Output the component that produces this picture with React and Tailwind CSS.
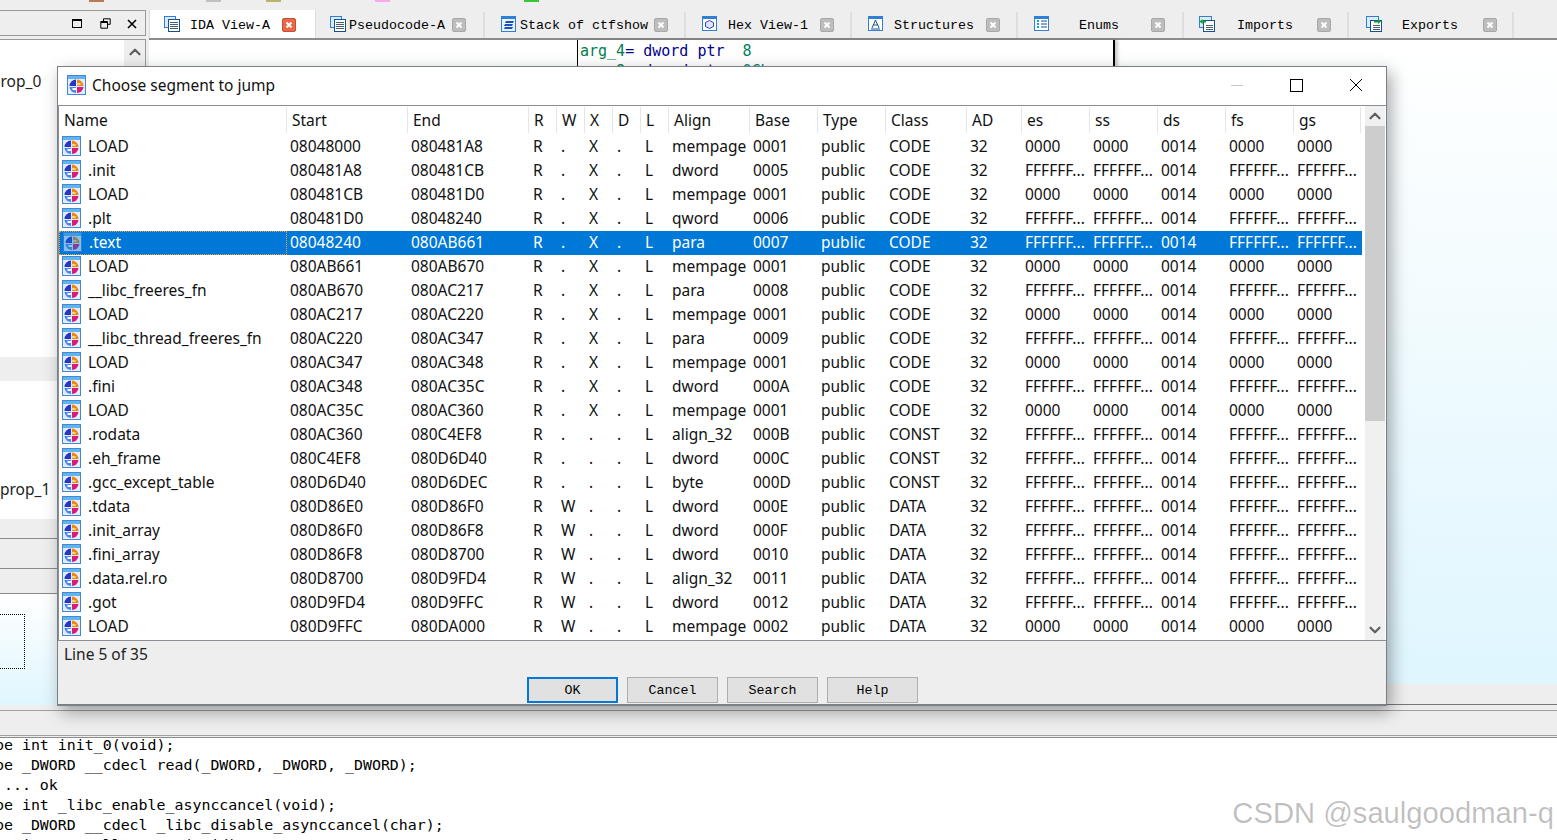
import { ChevronUp, ChevronDown } from 'lucide-react';

const UI = "font-['Noto_Sans',sans-serif]";
const TABS_FONT = "font-['Liberation_Mono',monospace]";
const CODE_FONT = "font-['DejaVu_Sans_Mono',monospace]";
const COLS = 'grid grid-cols-[228px_121px_120px_28px_28px_28px_28px_28px_81px_68px_68px_81px_55px_68px_68px_68px_68px_68px]';
const HEAD_COLS = 'grid grid-cols-[228px_121px_121px_28px_28px_28px_28px_28px_81px_68px_68px_81px_55px_68px_68px_68px_68px_67px]';

const HEADERS = ['Name', 'Start', 'End', 'R', 'W', 'X', 'D', 'L', 'Align', 'Base', 'Type', 'Class', 'AD', 'es', 'ss', 'ds', 'fs', 'gs'];

// name, start, end, write, exec, align, base, class
const SEGMENTS = [
  ['LOAD', '08048000', '080481A8', '.', 'X', 'mempage', '0001', 'CODE'],
  ['.init', '080481A8', '080481CB', '.', 'X', 'dword', '0005', 'CODE'],
  ['LOAD', '080481CB', '080481D0', '.', 'X', 'mempage', '0001', 'CODE'],
  ['.plt', '080481D0', '08048240', '.', 'X', 'qword', '0006', 'CODE'],
  ['.text', '08048240', '080AB661', '.', 'X', 'para', '0007', 'CODE'],
  ['LOAD', '080AB661', '080AB670', '.', 'X', 'mempage', '0001', 'CODE'],
  ['__libc_freeres_fn', '080AB670', '080AC217', '.', 'X', 'para', '0008', 'CODE'],
  ['LOAD', '080AC217', '080AC220', '.', 'X', 'mempage', '0001', 'CODE'],
  ['__libc_thread_freeres_fn', '080AC220', '080AC347', '.', 'X', 'para', '0009', 'CODE'],
  ['LOAD', '080AC347', '080AC348', '.', 'X', 'mempage', '0001', 'CODE'],
  ['.fini', '080AC348', '080AC35C', '.', 'X', 'dword', '000A', 'CODE'],
  ['LOAD', '080AC35C', '080AC360', '.', 'X', 'mempage', '0001', 'CODE'],
  ['.rodata', '080AC360', '080C4EF8', '.', '.', 'align_32', '000B', 'CONST'],
  ['.eh_frame', '080C4EF8', '080D6D40', '.', '.', 'dword', '000C', 'CONST'],
  ['.gcc_except_table', '080D6D40', '080D6DEC', '.', '.', 'byte', '000D', 'CONST'],
  ['.tdata', '080D86E0', '080D86F0', 'W', '.', 'dword', '000E', 'DATA'],
  ['.init_array', '080D86F0', '080D86F8', 'W', '.', 'dword', '000F', 'DATA'],
  ['.fini_array', '080D86F8', '080D8700', 'W', '.', 'dword', '0010', 'DATA'],
  ['.data.rel.ro', '080D8700', '080D9FD4', 'W', '.', 'align_32', '0011', 'DATA'],
  ['.got', '080D9FD4', '080D9FFC', 'W', '.', 'dword', '0012', 'DATA'],
  ['LOAD', '080D9FFC', '080DA000', 'W', '.', 'mempage', '0002', 'DATA'],
];

const TAB_LIST = [
  { label: 'IDA View-A', w: 'w-[167px]', pad: 'pl-[14px]', kind: 'view', active: true, gap: 'ml-[10px]', mr: 'mr-[19px]' },
  { label: 'Pseudocode-A', w: 'w-[169px]', pad: 'pl-[14px]', kind: 'view', gap: 'ml-[3px]', mr: 'mr-[17px]' },
  { label: 'Stack of ctfshow', w: 'w-[201px]', pad: 'pl-[16px]', kind: 'stack', gap: 'ml-[3px]', mr: 'mr-[16px]' },
  { label: 'Hex View-1', w: 'w-[166px]', pad: 'pl-[16px]', kind: 'hex', gap: 'ml-[10px]', mr: 'mr-[16px]' },
  { label: 'Structures', w: 'w-[166px]', pad: 'pl-[16px]', kind: 'struct', gap: 'ml-[10px]', mr: 'mr-[16px]' },
  { label: 'Enums', w: 'w-[166px]', pad: 'pl-[16px]', kind: 'enum', gap: 'ml-[29px]', mr: 'mr-[17px]' },
  { label: 'Imports', w: 'w-[165px]', pad: 'pl-[15px]', kind: 'imports', gap: 'ml-[22px]', mr: 'mr-[16px]' },
  { label: 'Exports', w: 'w-[165px]', pad: 'pl-[17px]', kind: 'exports', gap: 'ml-[20px]', mr: 'mr-[15px]' },
];

function SegIcon({ dim }) {
  return (
    <svg width="19" height="20" viewBox="0 0 19 20" className={dim ? 'mb-[2px] shrink-0 opacity-60' : 'mb-[2px] shrink-0'}>
      <rect x="0.5" y="0.5" width="18" height="19" fill="#e4eefa" stroke="#3f86dc" />
      <rect x="1" y="1" width="17" height="3" fill="#63b4ec" />
      <path d="M9 4.5 A6.5 6.5 0 0 0 2.5 11 H9 Z" fill="#2536cc" />
      <path d="M10 4.5 A6.5 6.5 0 0 1 16.5 11 H10 Z" fill="#ee8a12" />
      <path d="M9 12 H2.5 A6.5 6.5 0 0 0 9 18 Z" fill="#4f84f0" />
      <path d="M10 12 H16.5 A6.5 6.5 0 0 1 10 18 Z" fill="#d81c7c" />
      <rect x="5.5" y="13" width="3.5" height="2" fill="#fff" />
      <rect x="10" y="8" width="3.5" height="2" fill="#f8d28a" />
    </svg>
  );
}

function TabIcon({ kind }) {
  return (
    <svg width="16" height="16" viewBox="0 0 16 16" className="mb-[2px] shrink-0">
      {kind === 'view' && (
        <>
          <rect x="0.5" y="0.5" width="11" height="11" fill="#dcebfa" stroke="#2f7fd6" />
          <rect x="4.5" y="3.5" width="11" height="12" fill="#fff" stroke="#16508f" />
          <path d="M6 6.5h8M6 8.5h8M6 10.5h8M6 12.5h8" stroke="#4d5d70" />
        </>
      )}
      {kind === 'stack' && (
        <>
          <rect x="0.5" y="0.5" width="14" height="15" fill="#eaf3fc" stroke="#2f7fd6" />
          <rect x="1" y="1" width="13" height="2" fill="#2f7fd6" />
          <path d="M5 5h8l-1 2H4zM4 8h8l-1 2H3zM4 11h8l-1 2H3z" fill="#1b4fc0" />
        </>
      )}
      {kind === 'hex' && (
        <>
          <rect x="0.5" y="0.5" width="14" height="14" fill="#fff" stroke="#2f7fd6" />
          <rect x="1" y="1" width="13" height="2" fill="#2f7fd6" />
          <path d="M7.5 4.5 11.5 6.5V10.5L7.5 12.5 3.5 10.5V6.5Z" fill="#dfe4ff" stroke="#2d3fd0" />
        </>
      )}
      {kind === 'struct' && (
        <>
          <rect x="0.5" y="0.5" width="14" height="14" fill="#fff" stroke="#2f7fd6" />
          <rect x="1" y="1" width="13" height="2" fill="#2f7fd6" />
          <path d="M4 12 7.5 4 11 12M5.5 9h4" fill="none" stroke="#16508f" />
          <path d="M3 13h9" stroke="#16508f" />
        </>
      )}
      {kind === 'enum' && (
        <>
          <rect x="0.5" y="0.5" width="14" height="14" fill="#fff" stroke="#2f7fd6" />
          <rect x="1" y="1" width="13" height="2" fill="#2f7fd6" />
          <path d="M3 5h2M3 8h2M3 11h2" stroke="#18a0e0" strokeWidth="2" />
          <path d="M7 5h6M7 8h6M7 11h6" stroke="#16508f" />
        </>
      )}
      {(kind === 'imports' || kind === 'exports') && (
        <>
          <rect x="0.5" y="0.5" width="12" height="11" fill="#dcebfa" stroke="#2f7fd6" />
          <rect x="4.5" y="4.5" width="11" height="11" fill="#fff" stroke="#16508f" />
          <path d="M7 9.5h7M7 11.5h7M7 13.5h7" stroke="#4d5d70" />
          {kind === 'imports' ? (
            <path d="M7 4.5H3.5V3L0.5 5.5 3.5 8V6.5H7Z" fill="#12a02c" />
          ) : (
            <path d="M8 4.5h4V3l3 2.5L12 8V6.5H8Z" fill="#12a02c" />
          )}
        </>
      )}
    </svg>
  );
}

function CloseBox({ active }) {
  return (
    <span className={`flex h-[14px] w-[14px] shrink-0 items-center justify-center rounded-[2px] border ${active ? 'border-[#c9502f] bg-[#e8684a]' : 'border-[#a8a8a8] bg-[#bdbdbd]'}`}>
      <svg width="8" height="8" viewBox="0 0 8 8">
        <path d="M1.5 1.5 6.5 6.5M6.5 1.5 1.5 6.5" stroke="#fff" strokeWidth="2" />
      </svg>
    </span>
  );
}

function TabBar() {
  return (
    <div className={`flex h-[28px] items-stretch text-[13.33px] text-black ${TABS_FONT}`}>
      {TAB_LIST.map((t) => (
        <div
          key={t.label}
          className={`flex items-center ${t.pad} ${t.w} ${t.active ? 'mb-[-1px] border-x border-[#dcdcdc] bg-white' : 'mt-[2px] border-r-2 border-[#dedede] bg-[#eeeeee]'}`}
        >
          <TabIcon kind={t.kind} />
          <span className={`mt-[2px] whitespace-pre ${t.gap}`}>{t.label}</span>
          <span className={`ml-auto ${t.mr}`}><CloseBox active={t.active} /></span>
        </div>
      ))}
    </div>
  );
}

function LeftPane() {
  return (
    <div className="flex w-[146px] shrink-0 flex-col">
      <div className="flex h-[26px] items-center justify-end border-y border-r border-[#9a9a9a] pr-[8px] pt-[1px]">
        <span className="h-[9px] w-[10px] border border-t-2 border-black" />
        <svg width="11" height="11" viewBox="0 0 11 11" className="ml-[18px]"><path d="M3.5 3V.8h6.7v5.5H8M.8 3.5h6.7v6.7H.8zM.8 4.5h6.7" fill="none" stroke="#000" /></svg>
        <svg width="10" height="10" viewBox="0 0 10 10" className="ml-[16px]"><path d="M1 1 9 9M9 1 1 9" stroke="#000" strokeWidth="1.6" /></svg>
      </div>
      <div className="h-[3px]" />
      <div className={`flex flex-1 flex-col border-r border-t border-[#9a9a9a] bg-white text-[15.5px] text-[#222] ${UI}`}>
        <div className="flex h-[317px]">
          <div className="flex-1 overflow-hidden pt-[30px]">
            <div className="ml-[-9px]">prop_0</div>
          </div>
          <div className="flex h-[27px] w-[21px] justify-center bg-[#eeeeee] pt-[3px]">
            <ChevronUp size={18} strokeWidth={3} className="text-[#606060]" />
          </div>
        </div>
        <div className="h-[24px] bg-[#eeeeee]" />
        <div className="flex h-[138px] items-end pb-[18px]">
          <span>prop_1</span>
        </div>
        <div className="h-[20px] border-b border-[#8a8a8a] bg-[#eeeeee]" />
        <div className="h-[30px] border-b border-[#8a8a8a] bg-[#eeeeee]" />
        <div className="h-[25px] border-b border-[#8a8a8a] bg-[#eeeeee]" />
        <div className="flex-1 bg-gradient-to-b from-white to-[#dff6fe] pt-[20px]">
          <div className="h-[55px] w-[25px] border-b border-r border-t border-dotted border-black" />
        </div>
      </div>
    </div>
  );
}

function GraphPane() {
  return (
    <div className="flex flex-1 flex-col">
      <div className="flex flex-1 border-t-2 border-[#8c8c8c] bg-gradient-to-b from-white to-[#dff6fe] pl-[428px]">
        <div className={`h-[120px] w-[538px] border-l border-r-2 border-black bg-white pl-[2px] pt-[1px] text-[15px] leading-[20px] shadow-[3px_0_3px_rgba(0,0,0,0.2)] ${CODE_FONT}`}>
          <div className="whitespace-pre"><span className="text-[#00804a]">arg_4</span><span className="text-[#000090]">= dword ptr</span>  <span className="text-[#007f5f]">8</span></div>
          <div className="whitespace-pre"><span className="text-[#00804a]">arg_8</span><span className="text-[#000090]">= dword ptr</span>  <span className="text-[#007f5f]">0Ch</span></div>
        </div>
      </div>
    </div>
  );
}

function Output() {
  return (
    <div className={`h-[103px] shrink-0 overflow-hidden border-t border-[#8c8c8c] bg-white text-[14.92px] leading-[20px] text-black ${CODE_FONT}`}>
      <div className="ml-[-5px] mt-[-3px] whitespace-pre">
        <div>pe int init_0(void);</div>
        <div>pe _DWORD __cdecl read(_DWORD, _DWORD, _DWORD);</div>
        <div> ... ok</div>
        <div>pe int _libc_enable_asynccancel(void);</div>
        <div>pe _DWORD __cdecl _libc_disable_asynccancel(char);</div>
        <div>pe int __mcall_wrapup(void);</div>
      </div>
    </div>
  );
}

function SegmentRow({ seg, selected }) {
  const [name, start, end, w, x, align, base, cls] = seg;
  const flat = name === 'LOAD' ? '0000' : 'FFFFFF...';
  const wide = [start, end];
  const flags = ['R', w, x, '.', 'L'];
  const rest = [align, base, 'public', cls, '32'];
  const regs = [flat, flat, '0014', flat, flat];
  return (
    <div className={`${COLS} h-[24px] items-center whitespace-nowrap ${selected ? 'bg-[#0078d7] text-white' : 'text-[#111]'}`}>
      <div className={`flex h-[24px] items-center gap-[7px] pl-[3px] ${selected ? 'border border-dotted border-[#e8a33d]' : ''}`}>
        <SegIcon dim={selected} />
        <span>{name}</span>
      </div>
      {wide.map((v, i) => <div key={i} className="pl-[3px]">{v}</div>)}
      {flags.map((v, i) => <div key={i} className="pl-[5px]">{v}</div>)}
      {rest.map((v, i) => <div key={i} className="pl-[4px]">{v}</div>)}
      {regs.map((v, i) => <div key={i} className="pl-[4px]">{v}</div>)}
    </div>
  );
}

function Dialog() {
  const buttons = ['OK', 'Cancel', 'Search', 'Help'];
  return (
    <div className={`absolute left-[57px] top-[66px] flex h-[640px] w-[1330px] flex-col border border-b-2 border-[#7b7f86] bg-[#eeeeee] shadow-[4px_6px_16px_rgba(0,0,0,0.35)] text-[15.5px] ${UI}`}>
      <div className="flex h-[38px] shrink-0 items-center bg-white pl-[9px] text-[#111]">
        <SegIcon />
        <span className="ml-[6px]">Choose segment to jump</span>
        <div className="ml-auto mb-[2px] mr-[23px] flex items-center">
          <span className="h-px w-[12px] bg-[#c8c8c8]" />
          <span className="ml-[47px] h-[13px] w-[13px] border border-black" />
          <svg width="14" height="14" viewBox="0 0 14 14" className="ml-[46px]"><path d="M1 1 13 13M13 1 1 13" stroke="#000" /></svg>
        </div>
      </div>
      <div className="flex h-[536px] shrink-0 border-b border-l border-t border-[#8a8e95] bg-white">
        <div className="w-[1303px] shrink-0">
          <div className={`${HEAD_COLS} h-[28px] items-center`}>
            {HEADERS.map((h) => (
              <div key={h} className="flex h-[26px] items-center border-r border-[#e5e5e5] pl-[5px] pt-[2px] text-[#111]">{h}</div>
            ))}
          </div>
          <div className="h-px" />
          {SEGMENTS.map((s, i) => <SegmentRow key={i} seg={s} selected={i === 4} />)}
        </div>
        <div className="ml-[3px] flex w-[20px] shrink-0 flex-col items-center bg-[#f0f0f0]">
          <div className="flex h-[20px] items-center"><ChevronUp size={18} strokeWidth={3} className="text-[#606060]" /></div>
          <div className="h-[295px] w-full bg-[#cdcdcd]" />
          <div className="mt-auto flex h-[21px] items-center"><ChevronDown size={18} strokeWidth={3} className="text-[#606060]" /></div>
        </div>
      </div>
      <div className="flex-1 px-[6px] pt-[2px] text-[#222]">Line 5 of 35</div>
      <div className={`mb-[1px] flex gap-[9px] pl-[469px] text-[13.33px] text-black ${TABS_FONT}`}>
        {buttons.map((b, i) => (
          <button key={b} className={`h-[26px] w-[91px] bg-[#e1e1e1] pt-[2px] ${i === 0 ? 'border-2 border-[#0078d7]' : 'border border-[#adadad]'}`}>{b}</button>
        ))}
      </div>
    </div>
  );
}

export default function App() {
  return (
    <div className="relative flex h-[840px] w-[1557px] flex-col overflow-hidden bg-[#eeeeee]">
      <div className="flex h-[2px] shrink-0">
        <span className="ml-[89px] w-[15px] bg-[#b97a5c]" />
        <span className="ml-[102px] w-[15px] bg-[#c0c0c0]" />
        <span className="ml-[45px] w-[15px] bg-[#b5b56e]" />
        <span className="ml-[94px] w-[15px] bg-[#f9a8f0]" />
        <span className="ml-[134px] w-[15px] bg-[#37c837]" />
      </div>
      <div className="flex h-[703px] shrink-0 pt-[8px]">
        <LeftPane />
        <div className="ml-[3px] flex flex-1 flex-col">
          <TabBar />
          <GraphPane />
          <div className="h-[21px] border-b border-[#777]" />
        </div>
      </div>
      <div className="h-[6px] shrink-0 border-b border-[#a0a0a0]" />
      <div className="h-[25px] shrink-0 border-b border-[#a0a0a0]" />
      <div className="h-px shrink-0" />
      <Output />
      <Dialog />
      <div className="absolute bottom-[12px] right-[3px] font-['Liberation_Sans',sans-serif] text-[29.2px] leading-none text-black/25">CSDN @saulgoodman-q</div>
    </div>
  );
}
